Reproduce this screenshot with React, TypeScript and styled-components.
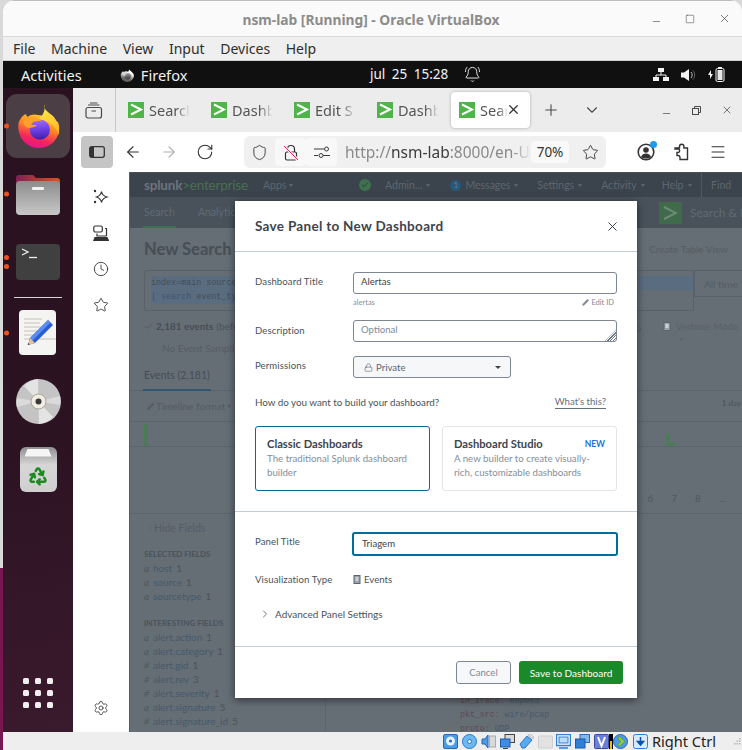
import React from "react"
import styled, { createGlobalStyle } from "styled-components"
import {
  ArrowLeft,
  ArrowRight,
  BellRing,
  ChevronDown,
  ChevronRight,
  ChevronLeft,
  Check,
  Clock,
  Download,
  Lock,
  Menu,
  Minus,
  Pencil,
  Plus,
  Recycle,
  RotateCw,
  Settings,
  Shield,
  Square,
  Star,
  X,
} from "lucide-react"

const GlobalStyle = createGlobalStyle`
  html, body {
    margin: 0;
    padding: 0;
    background: #dcdcdc;
  }
  * {
    box-sizing: border-box;
  }
`

const UI_FONT = `"Noto Sans", "DejaVu Sans", sans-serif`
const SPLUNK_FONT = `"Lato", "Open Sans", sans-serif`

const Desktop = styled.div`
  width: 742px;
  height: 750px;
  overflow: hidden;
  padding-left: 3px;
  background: linear-gradient(to bottom, #d9d9d9 568px, #77164f 568px);
  font-family: ${UI_FONT};
`

const Window = styled.div`
  width: 739px;
  height: 750px;
  display: flex;
  flex-direction: column;
  border-radius: 12px 12px 0 0;
  overflow: hidden;
`

const TitleBar = styled.div`
  height: 37px;
  flex: none;
  display: flex;
  align-items: center;
  justify-content: flex-end;
  position: relative;
  padding-right: 11px;
  gap: 23px;
  background: #fafafa;
  border-top: 1px solid #bdbdbd;
  border-bottom: 1px solid #d8d8d8;
  color: #444;
`

const TitleText = styled.div`
  position: absolute;
  left: 0;
  right: 0;
  top: 9px;
  text-align: center;
  font-size: 13.8px;
  font-weight: 700;
  color: #8c8c8c;
  padding-right: 3px;
`

const LowMinus = styled(Minus)`
  transform: translateY(3px);
`

const MenuBar = styled.div`
  height: 24px;
  flex: none;
  display: flex;
  align-items: center;
  gap: 15.6px;
  padding-left: 10px;
  background: #efefef;
  border-bottom: 1px solid #cfcfcf;
  font-size: 14px;
  color: #2e2e2e;
`

const GnomeBar = styled.div`
  height: 27px;
  flex: none;
  position: relative;
  display: flex;
  align-items: center;
  background: #101010;
  color: #f2f2f2;
  font-size: 14.6px;
  padding-left: 18px;
`

const AppName = styled.div`
  display: flex;
  align-items: center;
  gap: 7px;
  margin-left: 38px;
`

const GrayLogo = styled.span`
  display: flex;
  filter: grayscale(1) brightness(1.25);
`

const Clockface = styled.div`
  position: absolute;
  left: 367px;
  top: 4px;
  font-size: 13.5px;
  word-spacing: 3px;
  display: flex;
  align-items: center;
  gap: 16px;
`

const Tray = styled.div`
  margin-left: auto;
  margin-right: 17px;
  display: flex;
  align-items: center;
  gap: 12px;
`

const Guest = styled.div`
  flex: 1;
  min-height: 0;
  display: flex;
`

const Dock = styled.div`
  width: 70px;
  flex: none;
  display: flex;
  flex-direction: column;
  align-items: center;
  padding: 6px 0 24px;
  gap: 4px;
  background: linear-gradient(170deg, #2a1120 0%, #2c1322 55%, #3a1a2d 100%);
`

const DockItem = styled.div<{ $active?: boolean }>`
  position: relative;
  width: 64px;
  height: 64px;
  display: flex;
  align-items: center;
  justify-content: center;
  border-radius: 11px;
  background: ${p => (p.$active ? "#4b3f45" : "transparent")};
`

const RunDots = styled.div`
  position: absolute;
  left: -2px;
  top: 50%;
  transform: translateY(-50%);
  display: flex;
  flex-direction: column;
  gap: 4px;
`

const RunDot = styled.span`
  display: block;
  width: 5px;
  height: 5px;
  border-radius: 50%;
  background: #e95420;
`

const DockSeparator = styled.div`
  width: 48px;
  height: 1px;
  margin: -1px 0 -1px;
  flex: none;
  background: #d8d3d6;
`

const AppGrid = styled.div`
  margin-top: auto;
  display: grid;
  grid-template-columns: repeat(3, 6px);
  grid-auto-rows: 6px;
  gap: 6px;
`

const GridDot = styled.span`
  border-radius: 1.5px;
  background: #f1eef0;
`

const Browser = styled.div`
  flex: 1;
  min-width: 0;
  display: flex;
  flex-direction: column;
  background: #fff;
`

const TabStrip = styled.div`
  height: 44px;
  flex: none;
  display: flex;
  align-items: center;
  background: #ececec;
  color: #4b4b4b;
`

const ViewButton = styled.div`
  width: 43px;
  height: 44px;
  flex: none;
  display: flex;
  align-items: center;
  justify-content: center;
  border-right: 1px solid #c8c8c8;
`

const Tabs = styled.div`
  display: flex;
  align-items: center;
  padding-left: 1px;
`

const Tab = styled.div<{ $active?: boolean }>`
  position: relative;
  width: ${p => (p.$active ? "79px" : "83px")};
  height: 36px;
  margin-left: ${p => (p.$active ? "2px" : "0")};
  display: flex;
  align-items: center;
  gap: 5px;
  padding-left: ${p => (p.$active ? "8px" : "11px")};
  border-radius: 4px;
  background: ${p => (p.$active ? "#fff" : "transparent")};
  box-shadow: ${p => (p.$active ? "0 0 3px rgba(0,0,0,.3)" : "none")};
`

const TabLabel = styled.span<{ $width: number }>`
  width: ${p => p.$width}px;
  overflow: hidden;
  white-space: nowrap;
  font-size: 14.5px;
  color: #555;
  -webkit-mask-image: linear-gradient(to right, #000 65%, transparent);
  mask-image: linear-gradient(to right, #000 65%, transparent);
`

const TabClose = styled.span`
  position: absolute;
  right: 9px;
  top: 10px;
  display: flex;
  color: #333;
`

const StripIcons = styled.div`
  display: flex;
  align-items: center;
  margin-left: 12px;
  gap: 23px;
`

const WinButtons = styled.div`
  display: flex;
  align-items: center;
  margin-left: auto;
  margin-right: 9px;
  gap: 20px;
`

const NavBar = styled.div`
  height: 40px;
  flex: none;
  display: flex;
  align-items: center;
  padding-left: 8px;
  color: #3a3a3a;
`

const SideToggle = styled.div`
  width: 32px;
  height: 32px;
  flex: none;
  display: flex;
  align-items: center;
  justify-content: center;
  border-radius: 4px;
  background: #c5c5c5;
`

const NavIcons = styled.div`
  display: flex;
  align-items: center;
  gap: 18px;
  margin-left: 11px;
  color: #333;
`

const UrlBar = styled.div`
  width: 362px;
  height: 32px;
  margin-left: 30px;
  flex: none;
  display: flex;
  align-items: center;
  border-radius: 6px;
  background: #f0f0f0;
  color: #3a3a3a;
`

const UrlButton = styled.div<{ $tint?: boolean; $end?: boolean }>`
  width: 31px;
  height: 28px;
  flex: none;
  display: flex;
  align-items: center;
  justify-content: center;
  border-radius: 4px;
  margin-left: ${p => (p.$end ? "auto" : "0")};
  background: ${p => (p.$tint ? "#f8f8f8" : "transparent")};
`

const UrlText = styled.div`
  width: 186px;
  margin-left: 8px;
  overflow: hidden;
  white-space: nowrap;
  font-size: 15.5px;
  color: #8a8a8a;
  -webkit-mask-image: linear-gradient(to right, #000 90%, transparent);
  mask-image: linear-gradient(to right, #000 90%, transparent);
`

const UrlHost = styled.span`
  color: #3c3c3c;
`

const ZoomChip = styled.div`
  width: 38px;
  height: 22px;
  display: flex;
  align-items: center;
  justify-content: center;
  border-radius: 4px;
  background: #f9f9f9;
  font-size: 13.5px;
  color: #333;
`

const ToolIcons = styled.div`
  display: flex;
  align-items: center;
  margin-left: 31px;
  gap: 18px;
  color: #333;
`

const AccountWrap = styled.div`
  position: relative;
  display: flex;
`

const AccountDot = styled.span`
  position: absolute;
  right: -2px;
  top: -2px;
  width: 7px;
  height: 7px;
  border-radius: 50%;
  background: #1e9bf0;
`

const Content = styled.div`
  flex: 1;
  min-height: 0;
  display: flex;
`

const SideRail = styled.div`
  width: 56px;
  flex: none;
  display: flex;
  flex-direction: column;
  align-items: center;
  gap: 20px;
  padding: 17px 0 16px;
  color: #333;
  background: #fff;
`

const RailSpacer = styled.div`
  margin-top: auto;
  display: flex;
`

const Page = styled.div`
  position: relative;
  flex: 1;
  min-width: 0;
  display: flex;
  flex-direction: column;
  overflow: hidden;
  background: #656d75;
  border-left: 1px solid #555c63;
  font-family: ${SPLUNK_FONT};
  color: #4c545c;
`

const SplunkBar = styled.div`
  height: 25px;
  flex: none;
  display: flex;
  align-items: center;
  padding-left: 14px;
  background: #3b434c;
  color: #5c6771;
  font-size: 10.5px;
  white-space: nowrap;
  border-top: 1px solid #4a5058;
`

const SplunkLogo = styled.span`
  font-size: 13.5px;
  font-weight: 700;
  color: #6b747c;
  width: 119px;
  flex: none;
  letter-spacing: -0.2px;
`

const LogoAccent = styled.span`
  font-weight: 400;
  color: #48704f;
`

const BarItem = styled.span<{ $gap: number }>`
  display: inline-flex;
  align-items: center;
  gap: 4px;
  margin-left: ${p => p.$gap}px;
`

const Caret = styled.span`
  display: inline-block;
  width: 0;
  height: 0;
  border-left: 2.5px solid transparent;
  border-right: 2.5px solid transparent;
  border-top: 3px solid currentColor;
`

const OkDot = styled.span`
  width: 12px;
  height: 12px;
  border-radius: 50%;
  display: inline-flex;
  align-items: center;
  justify-content: center;
  background: #3f7150;
  color: #2e3a38;
`

const CountDot = styled.span`
  width: 11px;
  height: 11px;
  border-radius: 50%;
  display: inline-flex;
  align-items: center;
  justify-content: center;
  background: #27577a;
  color: #6a8294;
  font-size: 8px;
`

const FindBox = styled.span`
  margin-left: auto;
  width: 41px;
  height: 25px;
  display: flex;
  align-items: center;
  padding-left: 9px;
  border-left: 1px solid #515a63;
`

const AppBar = styled.div`
  height: 31px;
  flex: none;
  display: flex;
  align-items: center;
  padding-left: 13px;
  background: #49525b;
  font-size: 10.5px;
  color: #5f6a74;
  white-space: nowrap;
`

const AppTab = styled.span<{ $active?: boolean }>`
  height: 31px;
  display: flex;
  align-items: center;
  margin-right: 21px;
  padding: 0 1px;
  border-bottom: 2px solid ${p => (p.$active ? "#3f7150" : "transparent")};
`

const AppBrand = styled.div`
  margin-left: auto;
  display: flex;
  align-items: center;
  gap: 8px;
  font-size: 12px;
  width: 83px;
  overflow: hidden;
  flex: none;
`

const BrandTile = styled.span`
  width: 23px;
  height: 22px;
  flex: none;
  display: flex;
  align-items: center;
  justify-content: center;
  background: #3f6b4b;
`

const HeadRow = styled.div`
  height: 42px;
  flex: none;
  display: flex;
  align-items: center;
  justify-content: space-between;
  padding: 0 14px 1px 14px;
`

const Heading = styled.div`
  font-size: 16.5px;
  font-weight: 700;
  color: #474e56;
  white-space: nowrap;
`

const MutedLink = styled.div`
  font-size: 10px;
  color: #555d65;
  white-space: nowrap;
`

const SearchRow = styled.div`
  height: 41px;
  flex: none;
  margin-left: 14px;
  display: flex;
  border: 1px solid #59616a;
  border-radius: 2px 0 0 2px;
  width: 550px;
  padding: 5px 0 0 6px;
  flex-direction: column;
  font-family: "Liberation Mono", monospace;
  font-size: 8.4px;
  line-height: 14px;
  color: #454d55;
  position: relative;
`

const SearchLine = styled.div<{ $width?: number }>`
  background: #5a6c80;
  height: 14px;
  width: ${p => (p.$width ? `${p.$width}px` : "auto")};
  white-space: nowrap;
`

const Keyword = styled.span`
  color: #3c5570;
`

const TimePicker = styled.div`
  position: absolute;
  left: 549px;
  top: -1px;
  width: 60px;
  height: 27px;
  display: flex;
  align-items: center;
  gap: 3px;
  padding-left: 9px;
  border: 1px solid #59616a;
  font-family: ${SPLUNK_FONT};
  font-size: 10px;
  color: #555d65;
  white-space: nowrap;
`

const MetaRow = styled.div`
  height: 30px;
  flex: none;
  display: flex;
  align-items: center;
  padding-left: 14px;
  font-size: 10px;
  white-space: nowrap;
`

const MetaStrong = styled.b`
  color: #474e56;
  margin-left: 3px;
  margin-right: 3px;
`

const JobIcon = styled.span`
  margin-left: auto;
  margin-right: 21px;
  display: flex;
  color: #4f575f;
`

const Verbose = styled.div`
  width: 79px;
  display: flex;
  align-items: center;
  align-content: flex-start;
  flex-wrap: wrap;
  column-gap: 5px;
  row-gap: 6px;
  height: 30px;
  padding-top: 9px;
  overflow: hidden;
  font-size: 9.7px;
  color: #59616a;
`

const VerboseCaret = styled(Caret)`
  margin-left: 16px;
`

const SampleRow = styled.div`
  height: 14px;
  flex: none;
  display: flex;
  align-items: center;
  padding-left: 32px;
  font-size: 10px;
  color: #555d65;
  white-space: nowrap;
`

const ResultTabs = styled.div`
  height: 36px;
  flex: none;
  display: flex;
  align-items: flex-end;
  padding-left: 13px;
  gap: 22px;
  border-bottom: 1px solid #5b636b;
  font-size: 10.5px;
  white-space: nowrap;
`

const ResultTab = styled.span<{ $active?: boolean }>`
  height: 27px;
  padding: 5px 1px 0;
  border-bottom: 2px solid ${p => (p.$active ? "#31566f" : "transparent")};
  margin-bottom: -1px;
  color: ${p => (p.$active ? "#474e56" : "#545c64")};
`

const TimelineRow = styled.div`
  height: 31px;
  flex: none;
  display: flex;
  align-items: center;
  justify-content: space-between;
  padding: 0 0 0 17px;
  font-size: 10px;
  color: #545c64;
  border-bottom: 1px solid #5b636b;
`

const TimelineFormat = styled.span`
  display: inline-flex;
  align-items: center;
  gap: 2px;
`

const DayLabel = styled.span`
  font-size: 8px;
  margin-right: 1px;
  margin-top: -6px;
  color: #4b5259;
`

const Chart = styled.div`
  height: 25px;
  flex: none;
  display: flex;
  align-items: flex-end;
  padding-left: 14px;
  border-bottom: 1px solid #5b636b;
`

const ChartBar = styled.span<{ $h: number; $w: number }>`
  display: block;
  width: ${p => p.$w}px;
  height: ${p => p.$h}px;
  background: #4e7a5a;
`

const ChartGroup = styled.div`
  margin-left: auto;
  margin-right: 67px;
  display: flex;
  align-items: flex-end;
`

const Pager = styled.div`
  height: 67px;
  flex: none;
  display: flex;
  justify-content: flex-end;
  align-items: center;
  gap: 18px;
  padding: 36px 16px 0 0;
  font-size: 10px;
  color: #50585f;
  border-bottom: 1px solid #5b636b;
`

const Results = styled.div`
  flex: 1;
  min-height: 0;
  display: flex;
`

const FieldsColumn = styled.div`
  width: 196px;
  flex: none;
  padding: 6px 0 0 14px;
  font-size: 10px;
  white-space: nowrap;
  border-right: 1px solid #5d656d;
`

const HideFields = styled.div`
  display: flex;
  align-items: center;
  height: 16px;
  margin-left: 2px;
  font-size: 10.5px;
  color: #555d65;
`

const FieldHeading = styled.div<{ $top: number }>`
  margin-top: ${p => p.$top}px;
  height: 14px;
  line-height: 14px;
  font-size: 8px;
  font-weight: 700;
  color: #4b535b;
`

const FieldRow = styled.div`
  height: 14px;
  line-height: 14px;
  color: #4c545c;
`

const FieldType = styled.span`
  display: inline-block;
  width: 9px;
  font-style: italic;
  font-family: "Liberation Serif", serif;
`

const FieldName = styled.span`
  color: #465a6b;
  margin-right: 4px;
`

const EventsColumn = styled.div`
  flex: 1;
  display: flex;
  flex-direction: column;
  justify-content: flex-end;
  padding: 0 0 0 134px;
  font-family: "Liberation Mono", monospace;
  font-size: 8.25px;
  line-height: 14px;
  margin-bottom: -4px;
`

const EventKey = styled.span`
  color: #5c4b52;
`

const EventValue = styled.span`
  color: #47596b;
`

const Dialog = styled.div`
  position: absolute;
  left: 105px;
  top: 29px;
  width: 402px;
  height: 497px;
  display: flex;
  flex-direction: column;
  background: #fff;
  box-shadow: 0 2px 8px rgba(0, 0, 0, 0.55);
  font-family: ${SPLUNK_FONT};
  color: #3c444d;
`

const DialogHead = styled.div`
  height: 51px;
  flex: none;
  display: flex;
  align-items: center;
  justify-content: space-between;
  padding: 0 17px 0 20px;
  border-bottom: 1px solid #c3cbd4;
  font-size: 13.5px;
  font-weight: 700;
  letter-spacing: 0.3px;
`

const DialogClose = styled.span`
  display: flex;
  color: #3c444d;
`

const DialogBody = styled.div`
  flex: none;
  height: 260px;
  padding: 20px 20px 0 20px;
  border-bottom: 1px solid #c3cbd4;
`

const FormRow = styled.div<{ $after?: number }>`
  display: flex;
  align-items: flex-start;
  margin-bottom: ${p => p.$after ?? 0}px;
`

const FieldLabel = styled.div<{ $pad?: number }>`
  width: 98px;
  flex: none;
  padding-top: ${p => p.$pad ?? 4}px;
  font-size: 9.6px;
  letter-spacing: 0.1px;
  color: #49525b;
  white-space: nowrap;
`

const TextField = styled.div<{ $focus?: boolean; $placeholder?: boolean }>`
  position: relative;
  width: 264px;
  height: 22px;
  display: flex;
  align-items: center;
  padding: 0 0 3px 7px;
  border: 1px solid #7d8794;
  border-radius: 3px;
  background: #fff;
  font-size: 9.6px;
  color: ${p => (p.$placeholder ? "#7f8a98" : "#3c444d")};
`

const Hatch = styled.span`
  position: absolute;
  right: 0;
  bottom: 0;
  width: 11px;
  height: 11px;
  background: repeating-linear-gradient(
    135deg,
    transparent 0 1px,
    #6b7582 1px 2px
  );
  clip-path: polygon(100% 0, 100% 100%, 0 100%);
`

const FieldStack = styled.div`
  width: 264px;
`

const FieldHint = styled.div`
  height: 26px;
  display: flex;
  justify-content: space-between;
  align-items: flex-start;
  padding: 4px 3px 0 0;
  font-size: 7.5px;
  color: #8590a0;
`

const EditId = styled.span`
  display: inline-flex;
  align-items: center;
  gap: 2px;
  color: #7f8a98;
`

const SelectBox = styled.div`
  width: 158px;
  height: 22px;
  display: flex;
  align-items: center;
  gap: 3px;
  padding-left: 10px;
  border: 1px solid #7d8794;
  border-radius: 3px;
  background: #f5f7f9;
  font-size: 9.6px;
  color: #5b6673;
`

const SelectCaret = styled(Caret)`
  margin-left: auto;
  margin-right: 9px;
  border-left-width: 3px;
  border-right-width: 3px;
  border-top-width: 3px;
  color: #3c444d;
`

const BuildRow = styled.div`
  display: flex;
  justify-content: space-between;
  align-items: center;
  height: 14px;
  padding-right: 11px;
  font-size: 9.8px;
  color: #49525b;
`

const HelpLink = styled.span`
  color: #66707d;
  border-bottom: 1px solid #66707d;
  line-height: 12px;
  font-size: 9.6px;
`

const Cards = styled.div`
  display: flex;
  gap: 12px;
  margin-top: 17px;
`

const Card = styled.div<{ $selected?: boolean }>`
  width: 175px;
  height: 65px;
  padding: 10px 11px 0 11px;
  border: 1px solid ${p => (p.$selected ? "#006d9c" : "#e1e6eb")};
  border-radius: 3px;
`

const CardTitleRow = styled.div`
  display: flex;
  justify-content: space-between;
  align-items: center;
  font-size: 11.2px;
  font-weight: 700;
  line-height: 14px;
  color: #3c444d;
`

const NewBadge = styled.span`
  font-size: 8.5px;
  color: #1d72d8;
`

const CardText = styled.div`
  font-size: 9.7px;
  line-height: 14px;
  color: #838e9c;
`

const PanelSection = styled.div`
  flex: none;
  height: 135px;
  padding: 20px 19px 0 20px;
  border-bottom: 1px solid #c3cbd4;
`

const FocusField = styled(TextField)`
  width: 266px;
  height: 24px;
  margin-left: -1px;
  padding: 0 0 2px 8px;
  border: 2px solid #006d9c;
`

const VizRow = styled.div`
  display: flex;
  align-items: center;
  margin-top: 15px;
  height: 16px;
`

const VizValue = styled.span`
  display: inline-flex;
  align-items: center;
  gap: 3px;
  font-size: 9.6px;
  color: #49525b;
`

const AdvancedRow = styled.div`
  display: flex;
  align-items: center;
  gap: 4px;
  margin: 21px 0 0 4px;
  font-size: 10px;
  color: #49525b;
`

const DialogFoot = styled.div`
  flex: 1;
  display: flex;
  justify-content: flex-end;
  align-items: flex-start;
  gap: 8px;
  padding: 14px 14px 0 0;
`

const CancelButton = styled.button`
  width: 55px;
  height: 23px;
  padding: 0;
  border: 1px solid #7d8794;
  border-radius: 3px;
  background: #f5f7f9;
  font-family: ${SPLUNK_FONT};
  font-size: 9.6px;
  color: #7f8a98;
`

const SaveButton = styled.button`
  width: 104px;
  height: 23px;
  padding: 0;
  border: 0;
  border-radius: 3px;
  background: #1a8929;
  font-family: ${SPLUNK_FONT};
  font-size: 10px;
  color: #fff;
`

const StatusBar = styled.div`
  height: 18px;
  flex: none;
  display: flex;
  align-items: center;
  justify-content: flex-end;
  padding-right: 1px;
  gap: 3.9px;
  background: #eeeeee;
  color: #222;
  font-size: 14.6px;
  white-space: nowrap;
`

const GuestSlot = styled.span`
  display: flex;
  margin-left: -4px;
`

const HostKey = styled.span`
  margin-left: 0;
  margin-right: 14px;
`

function Favicon() {
  return (
    <svg width="16" height="16" viewBox="0 0 16 16" style={{ flex: "none" }}>
      <rect width="16" height="16" fill="#4fb54a" />
      <path d="M3 2.5 13 7.5 3 12.5" fill="none" stroke="#fff" strokeWidth="2" />
    </svg>
  )
}

function FirefoxLogo({ size, id }: { size: number; id: string }) {
  return (
    <svg width={size} height={size} viewBox="0 0 48 48">
      <defs>
        <linearGradient id={`${id}Body`} x1="0.75" y1="0" x2="0.4" y2="1">
          <stop offset="0" stopColor="#ffd52e" />
          <stop offset="0.4" stopColor="#ff8a25" />
          <stop offset="0.75" stopColor="#f5265a" />
          <stop offset="1" stopColor="#e5148c" />
        </linearGradient>
        <linearGradient id={`${id}Flame`} x1="0.4" y1="0" x2="0.6" y2="1">
          <stop offset="0" stopColor="#fff04a" />
          <stop offset="1" stopColor="#ffb326" />
        </linearGradient>
        <linearGradient id={`${id}Core`} x1="0.4" y1="0" x2="0.5" y2="1">
          <stop offset="0" stopColor="#a06bff" />
          <stop offset="0.55" stopColor="#6a3be0" />
          <stop offset="1" stopColor="#3d1fa8" />
        </linearGradient>
      </defs>
      <path d="M3 20c2-5 5-8 8-9 0 2 1 3 2 3 3-3 8-3 11-2 7 0 15 4 22 8 1.500 4 1.500 8 .5 11-2 10-11 17-22 17C11 48 0 35 3 20z" fill={`url(#${id}Body)`} />
      <path d="M31 0c-1 6 3 8 8 12 6 5 9 13 7.500 22-2-8-7-13-14-15-4-1-7-1-9-2 5-3 9-9 7.500-17z" fill={`url(#${id}Flame)`} />
      <circle cx="26" cy="28" r="11" fill={`url(#${id}Core)`} />
      <path d="M8 20c3-5 10-7 16-4 2 .8 3 2 4 3-5-1-10 0-12 3 2 1 5 1 7 1-3 3-9 4-12 2-2-1-3-3-3-5z" fill="#ffa02e" />
    </svg>
  )
}

function FolderIcon() {
  return (
    <svg width="44" height="41" viewBox="0 0 44 41">
      <defs>
        <linearGradient id="fBack" x1="0" y1="0" x2="1" y2="0">
          <stop offset="0" stopColor="#7a2452" />
          <stop offset="1" stopColor="#d4552a" />
        </linearGradient>
        <linearGradient id="fFront" x1="0" y1="0" x2="0" y2="1">
          <stop offset="0" stopColor="#8c8c8c" />
          <stop offset="1" stopColor="#c8c8c8" />
        </linearGradient>
      </defs>
      <path d="M0 4a3 3 0 0 1 3-3h14l3 3h21a3 3 0 0 1 3 3v10H0z" fill="url(#fBack)" />
      <rect y="7" width="44" height="34" rx="4" fill="url(#fFront)" />
      <rect x="16" y="13" width="12" height="3" rx="1" fill="#f2f2f2" />
    </svg>
  )
}

function TerminalIcon() {
  return (
    <svg width="44" height="37" viewBox="0 0 44 37">
      <rect width="44" height="36" rx="4" fill="#404040" />
      <path d="M6 5l6 3-6 3" fill="none" stroke="#eee" strokeWidth="1.3" />
      <path d="M13 13.500h8" stroke="#eee" strokeWidth="1.3" />
    </svg>
  )
}

function EditorIcon() {
  return (
    <svg width="38" height="46" viewBox="0 0 38 46">
      <rect width="37" height="45" rx="4" fill="#f4f4f2" />
      <path d="M5 9h18M5 13h16M5 17h18M5 21h14M5 25h12M5 29h32" stroke="#c6c2b4" strokeWidth="1.2" />
      <path d="M29 10l5 5-18 18-7 2 2-7z" fill="#2a5cd6" />
      <path d="M29 10l2.500 2.500L13 31l-4 4 2-7z" fill="#5b8cf0" />
      <path d="M11 28l5 5-7 2z" fill="#f0c08a" />
      <path d="M9.500 33l-1 2 2-.6z" fill="#333" />
    </svg>
  )
}

function DiscIcon() {
  return (
    <svg width="45" height="45" viewBox="0 0 45 45">
      <circle cx="22.500" cy="22.500" r="22.500" fill="#c4c4c4" />
      <path d="M22.500 22.500 8 7a22 22 0 0 1 14-7zM22.500 22.500 37 38a22 22 0 0 1-14 7z" fill="#e4e4e4" />
      <path d="M22.500 22.500 44 17a22 22 0 0 1 0 9zM22.500 22.500 1 28a22 22 0 0 1 0-9z" fill="#dadada" />
      <circle cx="22.500" cy="22.500" r="7.500" fill="#f1ede2" stroke="#a8a294" />
      <circle cx="22.500" cy="22.500" r="3" fill="#3a3a3a" />
    </svg>
  )
}

const TrashCan = styled.div`
  position: relative;
  width: 37px;
  height: 45px;
  display: flex;
  align-items: flex-end;
  justify-content: center;
  padding-bottom: 6px;
  border-radius: 6px;
  background: linear-gradient(#8f8f8f, #d6d6d6 40%, #cfcfcf);
  color: #1d8a20;
`

const TrashLid = styled.span`
  position: absolute;
  left: 5px;
  top: 2px;
  width: 27px;
  height: 8px;
  border-radius: 2px 2px 0 0;
  background: #f5f5f5;
  clip-path: polygon(12% 0, 88% 0, 100% 100%, 0 100%);
`

function NetworkIcon() {
  return (
    <svg width="16" height="14" viewBox="0 0 16 14" fill="#f2f2f2">
      <rect x="5" y="0" width="6" height="4" />
      <rect x="0" y="9" width="6" height="4" />
      <rect x="10" y="9" width="6" height="4" />
      <path d="M8 4v3M3 9V7h10v2" fill="none" stroke="#f2f2f2" />
    </svg>
  )
}

function SoundIcon() {
  return (
    <svg width="15" height="14" viewBox="0 0 15 14">
      <path d="M0 4.500h3L8 1v12L3 9.500H0z" fill="#f2f2f2" />
      <path d="M10 4c1.500 1.500 1.500 4.500 0 6" stroke="#bbb" fill="none" />
      <path d="M12 2.500c2.200 2.500 2.200 6.500 0 9" stroke="#666" fill="none" />
    </svg>
  )
}

function BatteryIcon() {
  return (
    <svg width="17" height="15" viewBox="0 0 17 15">
      <path d="M3 3 0 8h2v4l3-5H3z" fill="#f2f2f2" />
      <rect x="8" y="1.500" width="8" height="13" rx="1.500" fill="none" stroke="#f2f2f2" />
      <rect x="9.500" y="3" width="5" height="10" fill="#e8e8e8" />
      <rect x="10" y="0" width="4" height="1.500" fill="#f2f2f2" />
    </svg>
  )
}

function ViewIcon() {
  return (
    <svg width="18" height="17" viewBox="0 0 18 17" fill="none" stroke="#4a4a4a" strokeWidth="1.2">
      <rect x="1" y="5.500" width="15.500" height="10.500" rx="2" />
      <path d="M3 3h11.500M5 1h7.500M6.500 9h4.500" />
    </svg>
  )
}

function RestoreIcon() {
  return (
    <svg width="9" height="9" viewBox="0 0 9 9" fill="none" stroke="#4b4b4b">
      <rect x="0.500" y="2.500" width="6" height="6" fill="#ececec" />
      <path d="M2.500 2.500v-2h6v6h-2" />
    </svg>
  )
}

function SidebarGlyph() {
  return (
    <svg width="16" height="12" viewBox="0 0 16 12">
      <rect x="0.700" y="0.700" width="14.600" height="10.600" rx="2" fill="#c5c5c5" stroke="#333" strokeWidth="1.3" />
      <rect x="1" y="1" width="4" height="10" fill="#333" />
    </svg>
  )
}

function InsecureLock() {
  return (
    <svg width="16" height="17" viewBox="0 0 16 17" fill="none">
      <path d="M4.500 8V5a3.500 3.500 0 0 1 7 0v3" stroke="#333" strokeWidth="1.2" />
      <rect x="2.500" y="8" width="11" height="8" rx="1.500" stroke="#333" strokeWidth="1.2" />
      <path d="M1 2l14 14" stroke="#f0f0f0" strokeWidth="3" />
      <path d="M1 2l14 14" stroke="#e22850" strokeWidth="1" />
    </svg>
  )
}

function PermissionsIcon() {
  return (
    <svg width="16" height="12" viewBox="0 0 16 12" fill="none" stroke="#3a3a3a" strokeWidth="1">
      <path d="M0 3h10M0 9.500h4" />
      <circle cx="12.500" cy="3" r="2" />
      <circle cx="7" cy="9.500" r="2" />
      <path d="M9 9.500h7" />
    </svg>
  )
}

function AccountIcon() {
  return (
    <svg width="18" height="18" viewBox="0 0 18 18">
      <circle cx="9" cy="9" r="7.800" fill="none" stroke="#333" strokeWidth="1.6" />
      <circle cx="9" cy="7" r="2.800" fill="#333" />
      <path d="M4 14c1-3 3-3.500 5-3.500s4 .5 5 3.500c-3 2-7 2-10 0z" fill="#333" />
    </svg>
  )
}

function ExtensionIcon() {
  return (
    <svg width="18" height="18" viewBox="0 0 18 18" fill="none" stroke="#333" strokeWidth="1.4">
      <path d="M2 5h4.500V3.500a2.200 2.200 0 0 1 4.400 0V5h3.600v11.500H7v-1.700a2 2 0 0 0-1.800-2.300H4V9.500h1a1.700 1.700 0 0 0 0-3.400H2z" />
    </svg>
  )
}

function ChatbotIcon() {
  return (
    <svg width="16" height="16" viewBox="0 0 16 16" fill="none" stroke="#333" strokeWidth="1.2">
      <rect x="0.800" y="1" width="8.500" height="6" rx="1.500" />
      <path d="M12 3.500h1.500V11" />
      <path d="M4 8.500V11h9.500" />
      <path d="M2 12.500h12l1.500 3H.8z" fill="#333" />
    </svg>
  )
}

function SparkIcon() {
  return (
    <svg width="16" height="16" viewBox="0 0 16 16" fill="none" stroke="#333" strokeWidth="1.2">
      <path d="M8.500 2.500c.5 3 2 4.600 5.500 5.500-3.500 1-5 2.500-5.500 5.500C8 10.500 6.500 9 3.500 8c3-.9 4.500-2.500 5-5.500z" />
      <circle cx="2" cy="2" r="1.200" fill="#333" stroke="none" />
      <circle cx="2" cy="13" r="1.200" fill="#333" stroke="none" />
    </svg>
  )
}

function HddIcon() {
  return (
    <svg width="15" height="15" viewBox="0 0 15 15">
      <rect x="0.500" y="0.500" width="14" height="14" rx="1.500" fill="#4a9be8" stroke="#2468b8" />
      <circle cx="7.500" cy="7" r="4.500" fill="#e6f2ff" />
      <circle cx="7.500" cy="7" r="1.500" fill="#2468b8" />
    </svg>
  )
}

function CdIcon() {
  return (
    <svg width="15" height="15" viewBox="0 0 15 15">
      <circle cx="7.500" cy="7.500" r="7" fill="#6cb8f2" stroke="#2a78c4" />
      <circle cx="7.500" cy="7.500" r="2" fill="#e8f4ff" stroke="#2a78c4" />
    </svg>
  )
}

function AudioIcon() {
  return (
    <svg width="15" height="15" viewBox="0 0 15 15">
      <path d="M1 5h3l3-4v13l-3-4H1z" fill="#4a9be8" stroke="#2468b8" />
      <rect x="8.500" y="2" width="6" height="11" fill="#d9d9d9" stroke="#aaa" />
    </svg>
  )
}

function NetIcon() {
  return (
    <svg width="15" height="15" viewBox="0 0 15 15">
      <rect x="5" y="0.500" width="9.500" height="8" fill="#d8d8d8" stroke="#444" />
      <rect x="0.500" y="5" width="9.500" height="8" fill="#3f8ce0" stroke="#1d5aa8" />
      <path d="M3 14.500h5" stroke="#444" />
    </svg>
  )
}

function UsbIcon() {
  return (
    <svg width="15" height="15" viewBox="0 0 15 15">
      <path d="M1 10l7-8 5 4-7 8H3z" fill="#5aa8ee" stroke="#2a78c4" />
      <path d="M9 1l2-1 4 3-1 2z" fill="#e2e2e2" stroke="#999" strokeWidth=".5" />
    </svg>
  )
}

function FolderShareIcon() {
  return (
    <svg width="15" height="15" viewBox="0 0 15 15">
      <rect x="0.500" y="2" width="14" height="12" rx="1" fill="#e2e2e2" stroke="#cfcfcf" />
    </svg>
  )
}

function DisplayIcon() {
  return (
    <svg width="15" height="15" viewBox="0 0 15 15">
      <rect x="0.500" y="0.500" width="14" height="11" fill="#fff" stroke="#2f7ed8" strokeWidth="1.500" />
      <rect x="3" y="3" width="9" height="6" fill="#bcdcf8" stroke="#2f7ed8" />
      <path d="M3 14h9" stroke="#2f7ed8" strokeWidth="1.500" />
    </svg>
  )
}

function CaptureIcon() {
  return (
    <svg width="15" height="15" viewBox="0 0 15 15">
      <rect x="5" y="0.500" width="9.500" height="8" fill="#82b8ec" stroke="#2a68b8" />
      <rect x="0.500" y="5" width="9.500" height="9" fill="#2f7ed8" stroke="#1d5aa8" />
    </svg>
  )
}

function VtIcon() {
  return (
    <svg width="19" height="15" viewBox="0 0 19 15">
      <rect x="0.500" y="0.500" width="14" height="14" rx="1" fill="#6a80d8" stroke="#3a4aa0" />
      <path d="M4 3l3.500 9L11 3" fill="none" stroke="#fff" strokeWidth="2" />
      <rect x="15" width="4" height="15" fill="#000" />
      <rect x="16" y="7" width="2" height="8" fill="#f2c200" />
    </svg>
  )
}

function GuestIcon() {
  return (
    <svg width="16" height="15" viewBox="0 0 16 15">
      <circle cx="7.500" cy="7.500" r="7" fill="#4f9ae6" stroke="#2468b8" />
      <path d="M6 2l6 5.500L6 13l-1-3 3-2.500L5 5z" fill="#8fd13a" stroke="#4e8a18" strokeWidth=".6" />
    </svg>
  )
}

function KeyIcon() {
  return (
    <svg width="15" height="15" viewBox="0 0 15 15">
      <rect x="0.500" y="0.500" width="14" height="14" rx="2" fill="#d8e9fa" stroke="#2f7ed8" />
      <path d="M7.500 3v7M4.500 7.500l3 3.500 3-3.500z" stroke="#0f4fa8" strokeWidth="1.500" fill="#0f4fa8" />
    </svg>
  )
}

function ResizeGrip() {
  return (
    <svg width="7" height="7" viewBox="0 0 7 7" fill="#b5b5b5">
      <rect x="5" y="0" width="1.500" height="1.500" />
      <rect x="2.500" y="2.500" width="1.500" height="1.500" />
      <rect x="5" y="2.500" width="1.500" height="1.500" />
      <rect x="0" y="5" width="1.500" height="1.500" />
      <rect x="2.500" y="5" width="1.500" height="1.500" />
      <rect x="5" y="5" width="1.500" height="1.500" />
    </svg>
  )
}

function FloppyGlyph() {
  return (
    <svg width="8" height="9" viewBox="0 0 8 9">
      <rect x="1" y="0.500" width="6" height="8" fill="#9aa2ac" stroke="#5b6673" />
      <path d="M2.500 3h3M2.500 5h3" stroke="#fff" />
    </svg>
  )
}

const fieldsSelected = [
  ["a", "host", "1"],
  ["a", "source", "1"],
  ["a", "sourcetype", "1"],
]

const fieldsInteresting = [
  ["a", "alert.action", "1"],
  ["a", "alert.category", "1"],
  ["#", "alert.gid", "1"],
  ["#", "alert.rev", "3"],
  ["#", "alert.severity", "1"],
  ["a", "alert.signature", "5"],
  ["#", "alert.signature_id", "5"],
]

function FieldList({ rows }: { rows: string[][] }) {
  return (
    <>
      {rows.map(([type, name, count]) => (
        <FieldRow key={name}>
          <FieldType>{type}</FieldType>
          <FieldName>{name}</FieldName>
          {count}
        </FieldRow>
      ))}
    </>
  )
}

function SaveDialog() {
  return (
    <Dialog>
      <DialogHead>
        Save Panel to New Dashboard
        <DialogClose>
          <X size={15} strokeWidth={1.6} />
        </DialogClose>
      </DialogHead>
      <DialogBody>
        <FormRow>
          <FieldLabel>Dashboard Title</FieldLabel>
          <FieldStack>
            <TextField>Alertas</TextField>
            <FieldHint>
              alertas
              <EditId>
                <Pencil size={7} fill="currentColor" />
                Edit ID
              </EditId>
            </FieldHint>
          </FieldStack>
        </FormRow>
        <FormRow $after={14}>
          <FieldLabel $pad={5}>Description</FieldLabel>
          <TextField $placeholder>
            Optional
            <Hatch />
          </TextField>
        </FormRow>
        <FormRow $after={17}>
          <FieldLabel $pad={4}>Permissions</FieldLabel>
          <SelectBox>
            <Lock size={9} strokeWidth={1.6} />
            Private
            <SelectCaret />
          </SelectBox>
        </FormRow>
        <BuildRow>
          How do you want to build your dashboard?
          <HelpLink>What's this?</HelpLink>
        </BuildRow>
        <Cards>
          <Card $selected>
            <CardTitleRow>Classic Dashboards</CardTitleRow>
            <CardText>The traditional Splunk dashboard builder</CardText>
          </Card>
          <Card>
            <CardTitleRow>
              Dashboard Studio
              <NewBadge>NEW</NewBadge>
            </CardTitleRow>
            <CardText>
              A new builder to create visually-
              <br />
              rich, customizable dashboards
            </CardText>
          </Card>
        </Cards>
      </DialogBody>
      <PanelSection>
        <FormRow>
          <FieldLabel $pad={4}>Panel Title</FieldLabel>
          <FocusField>Triagem</FocusField>
        </FormRow>
        <VizRow>
          <FieldLabel $pad={0}>Visualization Type</FieldLabel>
          <VizValue>
            <FloppyGlyph />
            Events
          </VizValue>
        </VizRow>
        <AdvancedRow>
          <ChevronRight size={12} strokeWidth={1.6} />
          Advanced Panel Settings
        </AdvancedRow>
      </PanelSection>
      <DialogFoot>
        <CancelButton>Cancel</CancelButton>
        <SaveButton>Save to Dashboard</SaveButton>
      </DialogFoot>
    </Dialog>
  )
}

function SplunkPage() {
  return (
    <Page>
      <SplunkBar>
        <SplunkLogo>
          splunk<LogoAccent>&gt;enterprise</LogoAccent>
        </SplunkLogo>
        Apps&nbsp;
        <Caret />
        <BarItem $gap={66}>
          <OkDot>
            <Check size={8} strokeWidth={3} />
          </OkDot>
        </BarItem>
        <BarItem $gap={14}>
          Admin...
          <Caret />
        </BarItem>
        <BarItem $gap={20}>
          <CountDot>1</CountDot>
          Messages
          <Caret />
        </BarItem>
        <BarItem $gap={19}>
          Settings
          <Caret />
        </BarItem>
        <BarItem $gap={19}>
          Activity
          <Caret />
        </BarItem>
        <BarItem $gap={17}>
          Help
          <Caret />
        </BarItem>
        <FindBox>Find</FindBox>
      </SplunkBar>
      <AppBar>
        <AppTab $active>Search</AppTab>
        <AppTab>Analytics</AppTab>
        <AppBrand>
          <BrandTile>
            <svg width="15" height="14" viewBox="0 0 15 14">
              <path d="M1 1l12 6-12 6" fill="none" stroke="#6d8a76" strokeWidth="2" />
            </svg>
          </BrandTile>
          Search &amp; R
        </AppBrand>
      </AppBar>
      <HeadRow>
        <Heading>New Search</Heading>
        <MutedLink>Create Table View</MutedLink>
      </HeadRow>
      <SearchRow>
        <SearchLine>index=main source=</SearchLine>
        <SearchLine $width={300}>
          <Keyword>| search</Keyword> event_type
        </SearchLine>
        <TimePicker>
          All time
          <Caret />
        </TimePicker>
      </SearchRow>
      <MetaRow>
        <Check size={9} />
        <MetaStrong>2,181 events</MetaStrong>
        (before
        <JobIcon>
          <Download size={11} strokeWidth={1.3} />
        </JobIcon>
        <Verbose>
          <FloppyGlyph />
          Verbose Mode
          <VerboseCaret />
        </Verbose>
      </MetaRow>
      <SampleRow>No Event Sampling</SampleRow>
      <ResultTabs>
        <ResultTab $active>Events (2,181)</ResultTab>
        <ResultTab>Patterns</ResultTab>
      </ResultTabs>
      <TimelineRow>
        <TimelineFormat>
          <Pencil size={7} fill="currentColor" />
          Timeline format
          <Caret />
        </TimelineFormat>
        <DayLabel>1 day</DayLabel>
      </TimelineRow>
      <Chart>
        <ChartBar $w={4} $h={22} />
        <ChartGroup>
          <ChartBar $w={4} $h={12} />
          <ChartBar $w={5} $h={4} />
        </ChartGroup>
      </Chart>
      <Pager>
        <span>6</span>
        <span>7</span>
        <span>8</span>
        <span>...</span>
      </Pager>
      <Results>
        <FieldsColumn>
          <HideFields>
            <ChevronLeft size={8} />
            Hide Fields
          </HideFields>
          <FieldHeading $top={11}>SELECTED FIELDS</FieldHeading>
          <FieldList rows={fieldsSelected} />
          <FieldHeading $top={13}>INTERESTING FIELDS</FieldHeading>
          <FieldList rows={fieldsInteresting} />
        </FieldsColumn>
        <EventsColumn>
          <div>
            <EventKey>in_iface:</EventKey> <EventValue>enp0s3</EventValue>
          </div>
          <div>
            <EventKey>pkt_src:</EventKey> <EventValue>wire/pcap</EventValue>
          </div>
          <div>
            <EventKey>proto:</EventKey> <EventValue>UDP</EventValue>
          </div>
        </EventsColumn>
      </Results>
      <SaveDialog />
    </Page>
  )
}

function BrowserWindow() {
  const tabs = [
    ["Search", 41],
    ["Dashb", 41],
    ["Edit S", 41],
    ["Dashb", 41],
  ] as const
  return (
    <Browser>
      <TabStrip>
        <ViewButton>
          <ViewIcon />
        </ViewButton>
        <Tabs>
          {tabs.map(([label, width], i) => (
            <Tab key={i}>
              <Favicon />
              <TabLabel $width={width}>{label}</TabLabel>
            </Tab>
          ))}
          <Tab $active>
            <Favicon />
            <TabLabel $width={28}>Sear</TabLabel>
            <TabClose>
              <X size={15} strokeWidth={2} />
            </TabClose>
          </Tab>
        </Tabs>
        <StripIcons>
          <Plus size={18} strokeWidth={1.5} />
          <ChevronDown size={18} strokeWidth={1.5} />
        </StripIcons>
        <WinButtons>
          <LowMinus size={11} strokeWidth={1.5} />
          <RestoreIcon />
          <X size={12} strokeWidth={1.5} />
        </WinButtons>
      </TabStrip>
      <NavBar>
        <SideToggle>
          <SidebarGlyph />
        </SideToggle>
        <NavIcons>
          <ArrowLeft size={18} strokeWidth={1.5} />
          <ArrowRight size={18} strokeWidth={1.5} color="#b0b0b0" />
          <RotateCw size={18} strokeWidth={1.5} />
        </NavIcons>
        <UrlBar>
          <UrlButton>
            <Shield size={17} strokeWidth={1.3} />
          </UrlButton>
          <UrlButton $tint>
            <InsecureLock />
          </UrlButton>
          <UrlButton $tint>
            <PermissionsIcon />
          </UrlButton>
          <UrlText>
            http://<UrlHost>nsm-lab</UrlHost>:8000/en-U
          </UrlText>
          <ZoomChip>70%</ZoomChip>
          <UrlButton $end>
            <Star size={17} strokeWidth={1.3} />
          </UrlButton>
        </UrlBar>
        <ToolIcons>
          <AccountWrap>
            <AccountIcon />
            <AccountDot />
          </AccountWrap>
          <ExtensionIcon />
          <Menu size={18} strokeWidth={1.4} />
        </ToolIcons>
      </NavBar>
      <Content>
        <SideRail>
          <SparkIcon />
          <ChatbotIcon />
          <Clock size={16} strokeWidth={1.3} />
          <Star size={16} strokeWidth={1.3} />
          <RailSpacer>
            <Settings size={16} strokeWidth={1.2} />
          </RailSpacer>
        </SideRail>
        <SplunkPage />
      </Content>
    </Browser>
  )
}

export default function App() {
  return (
    <Desktop>
      <GlobalStyle />
      <Window>
        <TitleBar>
          <TitleText>nsm-lab [Running] - Oracle VirtualBox</TitleText>
          <LowMinus size={11} strokeWidth={1.3} />
          <Square size={10} strokeWidth={1.3} />
          <X size={13} strokeWidth={1.3} />
        </TitleBar>
        <MenuBar>
          <span>File</span>
          <span>Machine</span>
          <span>View</span>
          <span>Input</span>
          <span>Devices</span>
          <span>Help</span>
        </MenuBar>
        <GnomeBar>
          Activities
          <AppName>
            <GrayLogo>
              <FirefoxLogo size={14} id="ffSmall" />
            </GrayLogo>
            Firefox
          </AppName>
          <Clockface>
            <span>jul 25 15:28</span>
            <BellRing size={17} strokeWidth={1.3} />
          </Clockface>
          <Tray>
            <NetworkIcon />
            <SoundIcon />
            <BatteryIcon />
          </Tray>
        </GnomeBar>
        <Guest>
          <Dock>
            <DockItem $active>
              <RunDots>
                <RunDot />
              </RunDots>
              <FirefoxLogo size={44} id="ffDock" />
            </DockItem>
            <DockItem>
              <RunDots>
                <RunDot />
              </RunDots>
              <FolderIcon />
            </DockItem>
            <DockItem>
              <RunDots>
                <RunDot />
                <RunDot />
              </RunDots>
              <TerminalIcon />
            </DockItem>
            <DockSeparator />
            <DockItem>
              <RunDots>
                <RunDot />
              </RunDots>
              <EditorIcon />
            </DockItem>
            <DockItem>
              <DiscIcon />
            </DockItem>
            <DockItem>
              <TrashCan>
                <TrashLid />
                <Recycle size={20} strokeWidth={3} />
              </TrashCan>
            </DockItem>
            <AppGrid>
              {Array.from({ length: 9 }, (_, i) => (
                <GridDot key={i} />
              ))}
            </AppGrid>
          </Dock>
          <BrowserWindow />
        </Guest>
        <StatusBar>
          <HddIcon />
          <CdIcon />
          <AudioIcon />
          <NetIcon />
          <UsbIcon />
          <FolderShareIcon />
          <DisplayIcon />
          <CaptureIcon />
          <VtIcon />
          <GuestSlot>
            <GuestIcon />
          </GuestSlot>
          <KeyIcon />
          <HostKey>Right Ctrl</HostKey>
          <ResizeGrip />
        </StatusBar>
      </Window>
    </Desktop>
  )
}
